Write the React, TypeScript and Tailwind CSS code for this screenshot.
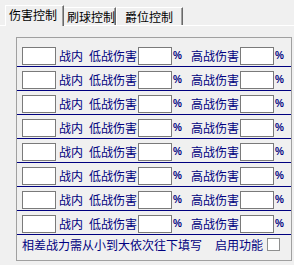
import React from "react";

const font = { fontFamily: '"Noto Sans CJK SC", "Noto Sans", sans-serif' };

function Input() {
  return <div className="h-[18px] w-[34px] shrink-0 bg-white border border-[#7a7a7a] box-border" />;
}

function Pct() {
  return (
    <span
      className="w-[7px] shrink-0 text-[10px] leading-none font-bold text-[#000080]"
      style={{ fontFamily: '"Liberation Sans", sans-serif' }}
    >
      %
    </span>
  );
}

function Row({ last }: { last?: boolean }) {
  return (
    <div>
      <div className="flex items-center h-[18px] pl-[5px] text-[12px] leading-none text-[#000080]">
        <Input />
        <span className="ml-[3px] w-[24px] shrink-0">战内</span>
        <span className="ml-[6px] w-[48px] shrink-0">低战伤害</span>
        <div className="ml-[1px]">
          <Input />
        </div>
        <div className="ml-[1px] flex items-center">
          <Pct />
        </div>
        <span className="ml-[11px] w-[48px] shrink-0">高战伤害</span>
        <div className="ml-[1px]">
          <Input />
        </div>
        <div className="ml-[1px] flex items-center">
          <Pct />
        </div>
      </div>
      <div className="mt-[1px] h-px bg-[#000080]" />
      {!last && <div className="h-[4px]" />}
    </div>
  );
}

export default function App() {
  const rows = [0, 1, 2, 3, 4, 5, 6, 7];
  return (
    <div className="w-[294px] h-[265px] bg-[#f0f0f0] overflow-hidden" style={font}>
      {/* tab strip */}
      <div className="flex items-end h-[25px] pl-[5px] text-[12px] leading-none text-black">
        <div className="relative z-10 -mb-px h-[21px] w-[59px] bg-[#f0f0f0] border-t border-l border-white border-r border-r-[#696969] box-border flex items-start justify-start pl-[3px] pt-[3px] shadow-[inset_-1px_0_0_#a0a0a0]">
          伤害控制
        </div>
        <div className="h-[18px] w-[52px] border-t border-white border-r border-r-[#696969] box-border flex items-start justify-start pl-[3px] pt-[3px] shadow-[inset_-1px_0_0_#a0a0a0]">
          刷球控制
        </div>
        <div className="h-[18px] w-[67px] border-t border-l border-white border-r border-r-[#696969] box-border flex items-start justify-start pl-[8px] pt-[3px] shadow-[inset_-1px_0_0_#a0a0a0]">
          爵位控制
        </div>
      </div>
      <div className="h-px bg-white" />
      {/* group box */}
      <div className="ml-[16px] mt-[11px] w-[276px] h-[224px] border border-[#a0a0a0] box-border pt-[9px]">
        {rows.map((r) => (
          <Row key={r} last={r === 7} />
        ))}
        <div className="flex items-center h-[13px] mt-[3px] pl-[5px] text-[12px] leading-none text-[#000080]">
          <span className="shrink-0">相差战力需从小到大依次往下填写</span>
          <span className="ml-[13px] shrink-0">启用功能</span>
          <div className="ml-[4px] w-[13px] h-[13px] bg-white border border-[#8e8f8f] box-border shrink-0" />
        </div>
      </div>
    </div>
  );
}
